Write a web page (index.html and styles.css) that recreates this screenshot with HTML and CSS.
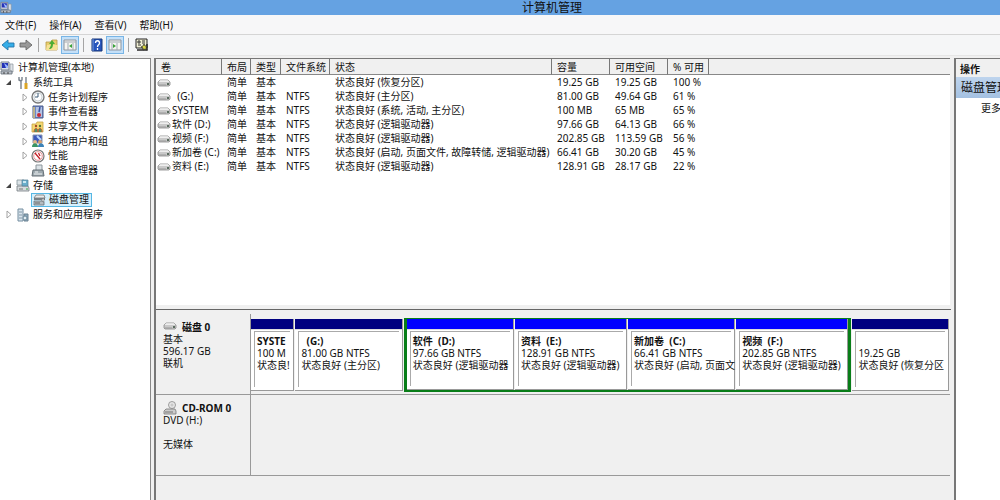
FILE: index.html
```html
<!DOCTYPE html>
<html lang="zh-CN">
<head>
<meta charset="utf-8">
<title>计算机管理</title>
<link rel="stylesheet" href="styles.css">
</head>
<body>
<svg class="defs" aria-hidden="true">
  <symbol id="computer" viewBox="0 0 14 14">
    <path d="M1 1h8v8H1z" fill="#d9dfe8" stroke="#77808d"/><path d="M2 2h6v5H2z" fill="#2433b5"/>
    <path d="M4 2l4 3v2H6z" fill="#9bb9ff"/><path d="M10 3h3v8h-3z" fill="#dfe3e8" stroke="#8b929b" stroke-width=".7"/>
    <path d="M1 10h11v3H1z" fill="#b9bec6" stroke="#666e79" stroke-width=".8"/><path d="M4 11v2M8 11v2" stroke="#444"/>
  </symbol>
  <symbol id="drive" viewBox="0 0 14 8">
    <path d="M3 1h8l2 2v3l-1 1H2L1 6V3z" fill="#c9c9c9" stroke="#888" stroke-width=".8"/>
    <path d="M3 1.300h8l1.500 1.700H1.500z" fill="#eee"/><path d="M2 6h7" stroke="#999"/><path d="M10 5h2" stroke="#364c3b" stroke-width="1.500"/>
  </symbol>
</svg>
<header class="titlebar">
  <svg class="app-icon"><use href="#computer"/></svg>
  <h1 class="title">计算机管理</h1>
</header>
<nav class="menubar">
  <button class="menu">文件(F)</button><button class="menu">操作(A)</button><button class="menu">查看(V)</button><button class="menu">帮助(H)</button>
</nav>
<div class="toolbar">
  <button class="tool" aria-label="后退"><svg class="i14" viewBox="0 0 14 14"><path d="M1 7l6-5v3h6v4H7v3z" fill="#35aee9" stroke="#2474a8" stroke-width=".9"/></svg></button>
  <button class="tool" aria-label="前进"><svg class="i14" viewBox="0 0 14 14"><path d="M13 7L7 2v3H1v4h6v3z" fill="#999" stroke="#686868" stroke-width=".9"/></svg></button>
  <span class="sep"></span>
  <button class="tool" aria-label="上一级"><svg class="i14" viewBox="0 0 14 14"><path d="M1 4h5l1-2h5v10H1z" fill="#e8ce6e" stroke="#b79a48" stroke-width=".8"/><path d="M2 7h11l-1 5H1z" fill="#f6e296"/><path d="M4 11c3 0 4-2 4-5h2L7 2 4 6h2c0 2-1 3-2 5z" fill="#4cad36"/></svg></button>
  <button class="tool pressed" aria-label="控制台树"><svg class="i14" viewBox="0 0 14 14"><path d="M1 2h12v10H1z" fill="#f5f5f1" stroke="#8d949d"/><path d="M1 4h12M5 5v7M10 5v7" stroke="#a1a9b2"/><path d="M9 6v4L6 8z" fill="#39a238"/></svg></button>
  <span class="sep"></span>
  <button class="tool" aria-label="帮助"><svg class="i14" viewBox="0 0 14 14"><path d="M2 1h10v12H2z" fill="#2856bd" stroke="#153477"/><path d="M3 1v12" stroke="#779bdc"/><path d="M5.500 5c0-3 4-3 4 0 0 2-2 1.500-2 4M7.500 10v2" fill="none" stroke="#fff" stroke-width="1.300"/></svg></button>
  <button class="tool pressed" aria-label="操作窗格"><svg class="i14" viewBox="0 0 14 14"><path d="M1 2h12v10H1z" fill="#f5f5f1" stroke="#8d949d"/><path d="M1 4h12M4 5v7M9 5v7" stroke="#a1a9b2"/><path d="M5 6v4l3-2z" fill="#39a238"/></svg></button>
  <span class="sep"></span>
  <button class="tool" aria-label="设置"><svg class="i14" viewBox="0 0 14 14"><path d="M1 1h11v9H1z" fill="#f0efd4" stroke="#222"/><path d="M3 3h2v2H3zM3 7h3M7 3h3M7 5h3" fill="none" stroke="#333"/><path d="M2 12h10V6" fill="none" stroke="#282828" stroke-width="1.500"/><path d="M9 6l1 2 2 0-1 2 1 2-2-1-2 1 0-2-2-1 2-1z" fill="#d9d743" stroke="#222" stroke-width=".7"/></svg></button>
</div>
<main class="workspace">
  <aside class="tree">
    <div class="node root"><svg class="i14"><use href="#computer"/></svg><span>计算机管理(本地)</span></div>
    <div class="node l1"><svg class="arrow" viewBox="0 0 7 9"><path d="M6 2v5H1z" fill="#444"/></svg><svg class="i14" viewBox="0 0 14 14"><path d="M3 1v3l2 1v8M6 1v3L5 5M10 1v6M10 8v5" fill="none" stroke="#77808b" stroke-width="1.400"/><path d="M10 7v6" stroke="#dba526" stroke-width="3"/></svg><span>系统工具</span></div>
    <div class="node l2"><svg class="arrow" viewBox="0 0 7 9"><path d="M2 1l4 3.500L2 8z" fill="#fff" stroke="#999" stroke-width=".9"/></svg><svg class="i14" viewBox="0 0 14 14"><circle cx="7" cy="7" r="6" fill="#edf1f3" stroke="#777" stroke-width="1.300"/><circle cx="7" cy="7" r="4" fill="#fff" stroke="#b9c0c4" stroke-width=".7"/><path d="M7 3v4H4" fill="none" stroke="#3d5c79"/></svg><span>任务计划程序</span></div>
    <div class="node l2"><svg class="arrow" viewBox="0 0 7 9"><path d="M2 1l4 3.500L2 8z" fill="#fff" stroke="#999" stroke-width=".9"/></svg><svg class="i14" viewBox="0 0 14 14"><path d="M2 1h10v12H2z" fill="#6f88c8" stroke="#4b5a88"/><path d="M5 2h6v10H5z" fill="#b4c3e4"/><path d="M3 2v11" stroke="#d9c37a" stroke-width="1.500"/><path d="M9 2l-1 5" stroke="#3a52a0" stroke-width="1.500"/><circle cx="8" cy="10" r="2" fill="#c82b35"/></svg><span>事件查看器</span></div>
    <div class="node l2"><svg class="arrow" viewBox="0 0 7 9"><path d="M2 1l4 3.500L2 8z" fill="#fff" stroke="#999" stroke-width=".9"/></svg><svg class="i14" viewBox="0 0 14 14"><path d="M1 4h4l1-2h6v10H1z" fill="#f4d872" stroke="#c8a344" stroke-width=".8"/><circle cx="5" cy="6" r="1.200" fill="#a74b28"/><circle cx="9" cy="6" r="1.200" fill="#527236"/><path d="M3 12c0-5 4-5 4 0M7 12c0-5 4-5 4 0" fill="#559064" stroke="#c66031"/></svg><span>共享文件夹</span></div>
    <div class="node l2"><svg class="arrow" viewBox="0 0 7 9"><path d="M2 1l4 3.500L2 8z" fill="#fff" stroke="#999" stroke-width=".9"/></svg><svg class="i14" viewBox="0 0 14 14"><path d="M2 1h9v8H2z" fill="#3b58bc" stroke="#8895ad"/><path d="M6 2l4 4" stroke="#b8d5ff" stroke-width="2"/><circle cx="4" cy="8" r="2" fill="#e6b987"/><circle cx="9" cy="8" r="2" fill="#d8a16e"/><path d="M1 13c0-5 6-5 6 0z" fill="#3a9466"/><path d="M7 13c0-5 6-5 6 0z" fill="#3c83b8"/></svg><span>本地用户和组</span></div>
    <div class="node l2"><svg class="arrow" viewBox="0 0 7 9"><path d="M2 1l4 3.500L2 8z" fill="#fff" stroke="#999" stroke-width=".9"/></svg><svg class="i14" viewBox="0 0 14 14"><circle cx="7" cy="7" r="6" fill="#fff" stroke="#777" stroke-width="1.200"/><circle cx="7" cy="7" r="4.300" fill="#fff" stroke="#dd7478" stroke-width=".8"/><path d="M4 4l5 6M7.500 4l1.500 3" stroke="#c51f28" stroke-width="1.300"/></svg><span>性能</span></div>
    <div class="node l2"><span class="arrow"></span><svg class="i14" viewBox="0 0 14 14"><path d="M5 1h6v6H5z" fill="#dce3e7" stroke="#8b959b"/><path d="M2 6h10l1 6H1z" fill="#9faab0" stroke="#646f76"/><path d="M3 10h8M4 8h3" stroke="#eff2f4"/></svg><span>设备管理器</span></div>
    <div class="node l1"><svg class="arrow" viewBox="0 0 7 9"><path d="M6 2v5H1z" fill="#444"/></svg><svg class="i14" viewBox="0 0 14 14"><path d="M1 2h7l1 5H1z" fill="#dde4e8" stroke="#84929a" stroke-width=".8"/><path d="M1 8h11l1 2v3H1z" fill="#d6dadd" stroke="#737b80" stroke-width=".8"/><path d="M6 2h6v6H6z" fill="#69aecb" stroke="#557f96" stroke-width=".7"/><path d="M7 3h3v2H7z" fill="#c9e8f2"/><path d="M3 11h4" stroke="#777"/><path d="M10 11h2" stroke="#32a846"/></svg><span>存储</span></div>
    <div class="node l2"><span class="arrow"></span><div class="selected"><svg class="i14" viewBox="0 0 14 14"><path d="M4 2h8l1 3H2z" fill="#e9ebec" stroke="#777" stroke-width=".8"/><path d="M2 5h11v2H2z" fill="#777f84"/><path d="M2 8h8l2 1v3H2z" fill="#b5bcc0" stroke="#667178" stroke-width=".8"/><path d="M3 10h5" stroke="#666"/><path d="M9 7l3-2v4z" fill="#d9dcde" stroke="#666" stroke-width=".5"/></svg><span>磁盘管理</span></div></div>
    <div class="node l1"><svg class="arrow" viewBox="0 0 7 9"><path d="M2 1l4 3.500L2 8z" fill="#fff" stroke="#999" stroke-width=".9"/></svg><svg class="i14" viewBox="0 0 14 14"><path d="M2 1h5v12H2z" fill="#d8e4ed" stroke="#758ea0"/><path d="M3 4h3M3 7h3M3 10h3" stroke="#8498a6"/><path d="M8 6h4v7H8z" fill="#8ba9bd" stroke="#6c8292"/><circle cx="9" cy="10" r="2" fill="#e3eef4" stroke="#6c899a"/></svg><span>服务和应用程序</span></div>
  </aside>
  <section class="center">
    <div class="volumes">
      <table class="grid">
        <colgroup><col class="c-vol"><col class="c-layout"><col class="c-type"><col class="c-fs"><col class="c-state"><col class="c-size"><col class="c-free"><col class="c-pct"><col></colgroup>
        <thead><tr><th>卷</th><th>布局</th><th>类型</th><th>文件系统</th><th>状态</th><th>容量</th><th>可用空间</th><th>% 可用</th><th></th></tr></thead>
        <tbody>
          <tr><td><svg class="vol"><use href="#drive"/></svg></td><td>简单</td><td>基本</td><td></td><td>状态良好 (恢复分区)</td><td>19.25 GB</td><td>19.25 GB</td><td>100 %</td><td></td></tr>
          <tr><td><svg class="vol"><use href="#drive"/></svg>&nbsp; (G:)</td><td>简单</td><td>基本</td><td>NTFS</td><td>状态良好 (主分区)</td><td>81.00 GB</td><td>49.64 GB</td><td>61 %</td><td></td></tr>
          <tr><td><svg class="vol"><use href="#drive"/></svg>SYSTEM</td><td>简单</td><td>基本</td><td>NTFS</td><td>状态良好 (系统, 活动, 主分区)</td><td>100 MB</td><td>65 MB</td><td>65 %</td><td></td></tr>
          <tr><td><svg class="vol"><use href="#drive"/></svg>软件 (D:)</td><td>简单</td><td>基本</td><td>NTFS</td><td>状态良好 (逻辑驱动器)</td><td>97.66 GB</td><td>64.13 GB</td><td>66 %</td><td></td></tr>
          <tr><td><svg class="vol"><use href="#drive"/></svg>视频 (F:)</td><td>简单</td><td>基本</td><td>NTFS</td><td>状态良好 (逻辑驱动器)</td><td>202.85 GB</td><td>113.59 GB</td><td>56 %</td><td></td></tr>
          <tr><td><svg class="vol"><use href="#drive"/></svg>新加卷 (C:)</td><td>简单</td><td>基本</td><td>NTFS</td><td>状态良好 (启动, 页面文件, 故障转储, 逻辑驱动器)</td><td>66.41 GB</td><td>30.20 GB</td><td>45 %</td><td></td></tr>
          <tr><td><svg class="vol"><use href="#drive"/></svg>资料 (E:)</td><td>简单</td><td>基本</td><td>NTFS</td><td>状态良好 (逻辑驱动器)</td><td>128.91 GB</td><td>28.17 GB</td><td>22 %</td><td></td></tr>
        </tbody>
      </table>
    </div>
    <div class="disks">
      <div class="disk">
        <div class="disk-info"><b><svg class="disk-icon" viewBox="0 0 14 14"><use href="#drive" y="2" width="14" height="8"/></svg>磁盘 0</b><span>基本</span><span>596.17 GB</span><span>联机</span></div>
        <div class="parts">
          <div class="part p-sys"><div class="bar"></div><div class="cell"><b>SYSTE</b><span>100 M</span><span>状态良!</span></div></div>
          <div class="part p-g"><div class="bar"></div><div class="cell"><b>&nbsp; (G:)</b><span>81.00 GB NTFS</span><span>状态良好 (主分区)</span></div></div>
          <div class="extended">
            <div class="part p-d"><div class="bar"></div><div class="cell"><b>软件&nbsp; (D:)</b><span>97.66 GB NTFS</span><span>状态良好 (逻辑驱动器</span></div></div>
            <div class="part p-e"><div class="bar"></div><div class="cell"><b>资料&nbsp; (E:)</b><span>128.91 GB NTFS</span><span>状态良好 (逻辑驱动器)</span></div></div>
            <div class="part p-c"><div class="bar"></div><div class="cell"><b>新加卷&nbsp; (C:)</b><span>66.41 GB NTFS</span><span>状态良好 (启动, 页面文</span></div></div>
            <div class="part p-f"><div class="bar"></div><div class="cell"><b>视频&nbsp; (F:)</b><span>202.85 GB NTFS</span><span>状态良好 (逻辑驱动器)</span></div></div>
          </div>
          <div class="part p-rec"><div class="bar"></div><div class="cell"><b>&nbsp;</b><span>19.25 GB</span><span>状态良好 (恢复分区</span></div></div>
        </div>
      </div>
      <div class="disk">
        <div class="disk-info"><b><svg class="disk-icon" viewBox="0 0 14 14"><circle cx="9" cy="4" r="3.500" fill="#e7e7e7" stroke="#888" stroke-width=".8"/><circle cx="9" cy="4" r="1" fill="#fff" stroke="#999" stroke-width=".6"/><path d="M3 8h9l1 2v3H1v-3z" fill="#ccc" stroke="#777" stroke-width=".8"/><path d="M2 11h8" stroke="#777"/></svg>CD-ROM 0</b><span>DVD (H:)</span><span>&nbsp;</span><span>无媒体</span></div>
      </div>
    </div>
  </section>
  <aside class="actions">
    <h2 class="actions-head">操作</h2>
    <h3 class="actions-group">磁盘管理</h3>
    <button class="more">更多操作</button>
  </aside>
</main>
</body>
</html>
```

FILE: styles.css
```css
* { box-sizing: border-box; }
body {
  margin: 0;
  height: 100vh;
  display: flex;
  flex-direction: column;
  overflow: hidden;
  background: #f0f0f0;
  color: #111;
  font: 10px/14px "Noto Sans", "Noto Sans CJK SC", sans-serif;
}
button { border: 0; padding: 0; background: none; color: inherit; font: inherit; }
svg { flex: none; display: block; }
.defs { position: absolute; width: 0; height: 0; }
.i14 { width: 14px; height: 14px; }

.titlebar { display: flex; align-items: center; height: 15px; background: #65a2e2; }
.app-icon { width: 12px; height: 13px; }
.title { flex: 1; margin: 0; padding-left: 92px; text-align: center; font-size: 12px; line-height: 15px; font-weight: 400; }
.menubar { display: flex; gap: 13px; height: 20px; padding: 0 5px; background: #f7f7f8; border-bottom: 1px solid #d5d5d5; }
.toolbar { display: flex; align-items: center; height: 21px; background: #f5f6f7; border-bottom: 1px solid #e6e6e6; }
.tool { display: flex; align-items: center; justify-content: center; width: 18px; height: 18px; }
.tool:first-child { width: 15px; }
.tool:nth-child(2) { width: 21px; }
.pressed { background: #c4e0f8; border: 1px solid #78b5e6; }
.sep { width: 1px; height: 14px; margin: 0 4px; background: #a5a5a5; }
.sep:nth-child(3) { margin-left: 2px; }

.workspace { flex: 1; min-height: 0; display: flex; gap: 3px; padding-top: 2px; }
.tree { width: 151px; padding-top: 1px; background: #fff; border-top: 1px solid #888; border-right: 1px solid #888; }
.node { display: flex; align-items: center; gap: 3px; height: 15px; line-height: 15px; white-space: nowrap; }
.node:nth-child(3n) { height: 14px; }
.root { gap: 4px; }
.l1 { padding-left: 5px; }
.l2 { padding-left: 21px; }
.arrow { width: 7px; height: 9px; }
.l1 .i14 { margin-left: 1px; }
.selected { display: flex; align-items: center; gap: 3px; height: 14px; padding-right: 2px; background: #d5effc; border: 1px solid #55b7e4; }

.center { flex: 1; min-width: 0; display: flex; flex-direction: column; border-left: 2px solid #777; }
.volumes { flex: 0 0 251px; margin-right: 1px; overflow: hidden; background: #fff; border-top: 1px solid #777; border-bottom: 4px solid #f0f0f0; }
.grid { width: 100%; table-layout: fixed; border-collapse: separate; border-spacing: 0; }
.grid th { height: 16px; padding: 0 0 0 5px; background: #f0f0f0; border-right: 1px solid #777; border-bottom: 1px solid #888; text-align: left; font-weight: 400; }
.grid th:last-child { border-right: 0; }
.grid td { height: 14px; padding: 0 0 0 5px; white-space: nowrap; line-height: 14px; }
.grid td:first-child { padding-left: 1px; }
.c-vol { width: 66px; }
.c-layout { width: 29px; }
.c-type { width: 30px; }
.c-fs { width: 49px; }
.c-state { width: 222px; }
.c-size { width: 58px; }
.c-free { width: 58px; }
.c-pct { width: 41px; }
.vol { display: inline-block; width: 14px; height: 8px; margin-right: 1px; vertical-align: -1px; }

.disks { flex: 1; min-height: 0; overflow: hidden; border-top: 1px solid #666; padding-top: 4px; }
.disk { display: flex; height: 81px; margin-right: 1px; border-bottom: 1px solid #999; }
.disk-info { display: flex; flex-direction: column; width: 95px; padding: 6px 7px; border-right: 1px solid #999; }
.disk-info b { display: flex; align-items: center; gap: 5px; height: 13px; }
.disk-info span { line-height: 12px; }
.disk-icon { width: 14px; height: 14px; }
.parts { flex: 1; min-width: 0; display: flex; align-items: stretch; gap: 1px; padding: 4px 1px 2px 0; }
.part { min-width: 0; display: flex; flex-direction: column; margin: 1px 0; background: #fff; border-right: 1px solid #999; border-bottom: 1px solid #999; }
.bar { height: 11px; background: #000080; border-bottom: 1px solid #ddd; }
.cell { flex: 1; min-width: 0; display: flex; flex-direction: column; margin: 1px 3px 3px 3px; padding: 3px 0 0 2px; white-space: nowrap; border-top: 1px solid #aaa; border-left: 1px solid #aaa; }
.cell b, .cell span { line-height: 12px; }
.p-sys { flex: 43 1 0; }
.p-g { flex: 108 1 0; }
.extended { flex: 448 1 0; min-width: 0; display: flex; gap: 1px; border: 1px solid #087d18; border-bottom-width: 2px; border-right-width: 3px; border-left-width: 3px; }
.extended .part { flex: 107 1 0; margin: 0; }
.extended .bar { background: #00f; }
.extended .p-e, .extended .p-f { flex-grow: 112; }
.p-rec { flex: 97 1 0; }

.actions { width: 46px; overflow: hidden; white-space: nowrap; background: #fff; border-top: 1px solid #777; border-left: 2px solid #777; }
.actions-head { margin: 0; height: 18px; padding-left: 4px; background: #f0f0f0; font-size: 10px; line-height: 20px; }
.actions-group { margin: 0; height: 21px; padding-left: 5px; background: linear-gradient(#bed4ed, #a4c1e2); font-size: 12px; line-height: 22px; font-weight: 400; }
.more { padding: 3px 0 0 25px; }
```
